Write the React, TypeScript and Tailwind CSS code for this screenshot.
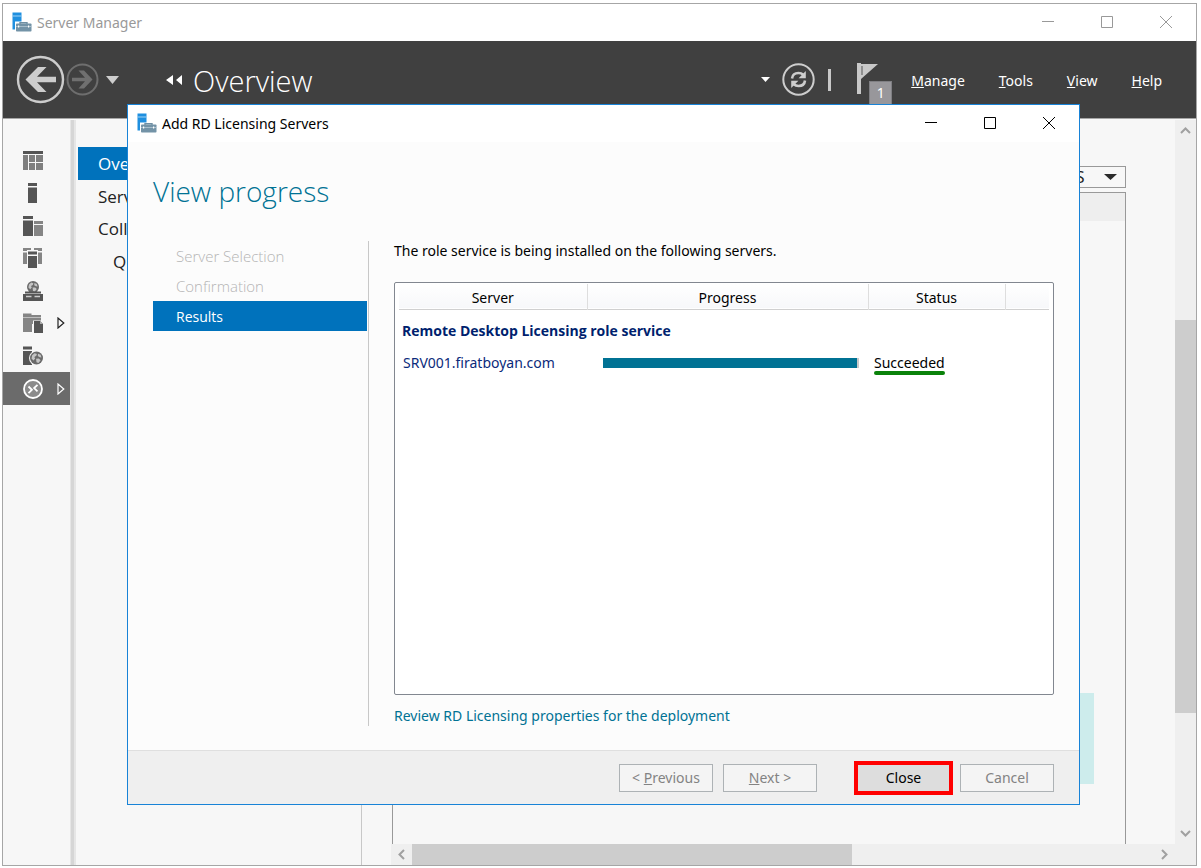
import type { ReactNode } from 'react';

function ServerIcon() {
  return (
    <svg width="20" height="20" viewBox="0 0 20 20" aria-hidden="true" className="mb-0.5">
      <rect x="0.500" y="0.500" width="9" height="17" fill="#1f8fdf" />
      <rect x="0.500" y="3.500" width="9" height="1" fill="#9fd4f5" />
      <path d="M3 9.500h17v10.500H3z" fill="#fff" />
      <path d="M8 12v-1.300h7v1.300" fill="none" stroke="#6f8fa3" strokeWidth="1.400" />
      <rect x="4" y="11.500" width="15.500" height="8" rx="0.800" fill="#7393a7" />
      <rect x="4" y="14" width="15.500" height="0.800" fill="#b5c8d4" />
      <rect x="6" y="13.500" width="1.200" height="2" fill="#fff" />
      <rect x="16" y="13.500" width="1.200" height="2" fill="#fff" />
    </svg>
  );
}

function WindowControls() {
  return (
    <div className="flex items-center gap-[46px]">
      <button type="button" aria-label="Minimize" className="flex size-[13px] items-center">
        <svg width="13" height="13" viewBox="0 0 13 13" stroke="currentColor" fill="none"><path d="M1 5.500h12" /></svg>
      </button>
      <button type="button" aria-label="Maximize" className="flex size-[13px] items-center">
        <svg width="13" height="13" viewBox="0 0 13 13" stroke="currentColor" fill="none"><path d="M1.500 0.500h11v11h-11z" /></svg>
      </button>
      <button type="button" aria-label="Close window" className="flex size-[13px] items-center">
        <svg width="13" height="13" viewBox="0 0 13 13" stroke="currentColor" fill="none"><path d="M1 0l12 12M13 0L1 12" /></svg>
      </button>
    </div>
  );
}

function Globe({ cx, cy, r }: { cx: number; cy: number; r: number }) {
  return (
    <g transform={`translate(${cx} ${cy}) scale(${r / 6})`}>
      <circle r="6" fill="#6a6a6a" />
      <path d="M-4-2.600l2.200-1.800 2.200.6-.6 1.800-1.800 1 .8 1.400-1.600 1.800-1.800-1.800zM1.400-4l2.400 1 .8 2.600-1.600-.4-1.800-1zM-.4.600l2.600-.2 1.600 1.600-2 2.600-1.800-.6z" fill="#c4c4c4" />
    </g>
  );
}

function SideIcon({ children }: { children: ReactNode }) {
  return (
    <svg width="20" height="20" viewBox="0 0 20 20" aria-hidden="true">
      {children}
    </svg>
  );
}

const sideItems: { label: string; arrow?: boolean; selected?: boolean; icon: ReactNode }[] = [
  {
    label: 'Dashboard',
    icon: (
      <>
        <path d="M0 1h20v3H0z" fill="#555" />
        <path d="M0 5h5v15H0zM6 5h6v7H6zM13 5h7v7h-7zM6 13h6v7H6zM13 13h7v7h-7z" fill="#7f7f7f" />
      </>
    ),
  },
  {
    label: 'Local Server',
    icon: <path d="M5 0h9v3H5zM5 4.500h9V20H5z" fill="#555" />,
  },
  {
    label: 'All Servers',
    icon: (
      <>
        <path d="M0 0h10v3H0zM0 4.500h10V20H0z" fill="#555" />
        <path d="M11 5h9v3h-9zM11 9h9v11h-9z" fill="#858585" />
      </>
    ),
  },
  {
    label: 'AD DS',
    icon: (
      <>
        <path d="M0 0h8v3H0zM0 4.500h4V16H0zM11 0h8v3h-8zM15 4.500h4V16h-4z" fill="#858585" />
        <path d="M4 2h11v18H4z" fill="#f7f7f7" />
        <path d="M5 3.500h9v3H5zM5 8h9v12H5z" fill="#555" />
      </>
    ),
  },
  {
    label: 'DHCP',
    icon: (
      <>
        <Globe cx={10} cy={6} r={6} />
        <path d="M2 10.500h16v2H2zM0 13h20v7H0z" fill="#555" />
        <path d="M3 15.500h5.500M11.500 15.500h5.500" stroke="#ccc" strokeWidth="1.400" />
      </>
    ),
  },
  {
    label: 'File Services',
    arrow: true,
    icon: (
      <>
        <path d="M0 0.500h8.500v1.500h9.500v2.500H0zM0 5h18v6H9v8H0z" fill="#858585" />
        <path d="M10 7.500h10V20H10z" fill="#f7f7f7" />
        <path d="M11 8h6l3 3v9h-9z" fill="#555" />
        <path d="M17 8v3h3z" fill="#aaa" />
      </>
    ),
  },
  {
    label: 'IIS',
    icon: (
      <>
        <path d="M0 0.500h9v3H0zM0 5h9v14H0z" fill="#555" />
        <circle cx="13.500" cy="12" r="7.500" fill="#f7f7f7" />
        <Globe cx={13.5} cy={12} r={6.5} />
      </>
    ),
  },
  {
    label: 'Remote Desktop Services',
    arrow: true,
    selected: true,
    icon: (
      <>
        <circle cx="10" cy="10" r="9" fill="#8b8b8b" stroke="#fff" strokeWidth="1.800" />
        <path d="M5.500 7.500l3.400 3.300-3.400 3.300M14.500 5.800l-3.400 3.300 3.400 3.300" fill="none" stroke="#fff" strokeWidth="1.800" />
      </>
    ),
  },
];

function Chevron({ d }: { d: string }) {
  return (
    <svg width="21" height="21" viewBox="0 0 21 21" fill="none" stroke="#a0a0a0" strokeWidth="2" className="shrink-0" aria-hidden="true">
      <path d={d} />
    </svg>
  );
}

const footerButton = 'h-7 w-[94px] border border-[#adb2b5] bg-[#f4f4f4] text-sm text-[#838383]';

function Dialog() {
  return (
    <section
      role="dialog"
      aria-label="Add RD Licensing Servers"
      className="absolute top-[100px] right-[116px] left-[124px] z-10 border border-[#1883d7] bg-[#fcfcfc] text-sm text-black"
    >
      <header className="flex h-[37px] items-center bg-white pr-6 pl-[9px]">
        <ServerIcon />
        <h2 className="ml-[5px] flex-1">Add RD Licensing Servers</h2>
        <WindowControls />
      </header>
      <h1 className="mt-[31px] ml-[25px] font-['Open_Sans',sans-serif] text-[28px] leading-9 font-light text-[#007294]">View progress</h1>
      <div className="mt-8 flex pr-[25px] pl-[25px]">
        <nav aria-label="Wizard steps" className="w-[216px] shrink-0 border-r border-[#c8c8c8] pr-px font-['Open_Sans',sans-serif] text-[15px]">
          <ol>
            <li className="flex h-[30px] items-center pt-0.5 pl-[23px] font-light text-[#b4b4b4]">Server Selection</li>
            <li className="flex h-[30px] items-center pt-0.5 pl-[23px] font-light text-[#b4b4b4]">Confirmation</li>
            <li aria-current="step" className="flex h-[30px] items-center bg-[#0072bc] pt-0.5 pl-[23px] text-sm text-white">Results</li>
          </ol>
        </nav>
        <div className="ml-[25px] min-w-0 flex-1">
          <p className="leading-5">The role service is being installed on the following servers.</p>
          <div className="mt-[21px] h-[413px] rounded-xs border border-[#828790] bg-white px-1 pt-px">
            <table className="w-full table-fixed border-collapse">
              <colgroup>
                <col className="w-[188px]" />
                <col className="w-[281px]" />
                <col className="w-[137px]" />
                <col />
              </colgroup>
              <thead>
                <tr className="h-[25px] border-b border-[#d0d0d0] bg-linear-to-b from-white to-[#f7f8fa]">
                  <th className="border-r border-[#dedede] p-0 pt-1 font-normal">Server</th>
                  <th className="border-r border-[#dedede] p-0 pt-1 font-normal">Progress</th>
                  <th className="border-r border-[#dedede] p-0 pt-1 font-normal">Status</th>
                  <td />
                </tr>
              </thead>
              <tbody>
                <tr className="h-11">
                  <th colSpan={4} className="p-0 pl-[3px] text-left font-['Open_Sans',sans-serif] font-bold text-[#001f6e]">Remote Desktop Licensing role service</th>
                </tr>
                <tr className="h-5">
                  <td className="p-0 pl-1 text-[#0b2a7a]">SRV001.firatboyan.com</td>
                  <td className="p-0 pr-[9px] pl-4">
                    <div role="progressbar" aria-label="Progress" aria-valuenow={100} className="h-[10px] border-r-2 border-[#c9c9c9] bg-[#007294]" />
                  </td>
                  <td className="p-0 pl-[6px]">
                    <span className="relative inline-block leading-5">
                      Succeeded
                      <span className="absolute inset-x-0 -bottom-0.5 h-1 rounded-full bg-[#0a820a]" />
                    </span>
                  </td>
                  <td />
                </tr>
              </tbody>
            </table>
          </div>
          <a href="#licensing" className="mt-[11px] block h-5 leading-5 text-[#007294]">
            Review RD Licensing properties for the deployment
          </a>
        </div>
      </div>
      <footer className="mt-6 flex h-[54px] items-center justify-end border-t border-[#dfdfdf] bg-[#efefef] pr-[25px]">
        <button type="button" disabled className={footerButton}>&lt; <u>P</u>revious</button>
        <button type="button" disabled className={`${footerButton} ml-[10px]`}><u>N</u>ext &gt;</button>
        <button type="button" className="ml-10 h-7 w-[93px] bg-[#dddddd] text-sm text-black outline-4 -outline-offset-1 outline-[#ff0000]">Close</button>
        <button type="button" disabled className={`${footerButton} ml-[10px]`}>Cancel</button>
      </footer>
    </section>
  );
}

function Toolbar() {
  return (
    <header className="flex h-[77px] shrink-0 items-center bg-[#404040] pl-[13px] text-white">
      <button type="button" aria-label="Back" className="shrink-0">
        <svg width="49" height="49" viewBox="0 0 49 49" fill="none">
          <circle cx="24.500" cy="24.500" r="22.500" stroke="#cdcdcd" strokeWidth="2.400" />
          <path d="M9.500 24.500l12.500-12.500h8.500l-9.500 9.800h19v5.400h-19l9.500 9.800h-8.500z" fill="#cdcdcd" />
        </svg>
      </button>
      <button type="button" aria-label="Forward" className="ml-px shrink-0">
        <svg width="33" height="33" viewBox="0 0 33 33" fill="none">
          <circle cx="16.500" cy="16.500" r="15" stroke="#6e6e6e" strokeWidth="2" />
          <path d="M26.500 16.500l-8.500 -9h-5.500l6.500 7.200h-13v3.600h13l-6.500 7.200h5.500z" fill="#707070" />
        </svg>
      </button>
      <button type="button" aria-label="History" className="ml-[7px] shrink-0">
        <svg width="13" height="8" viewBox="0 0 13 8"><path d="M0 0h13L6.500 8z" fill="#cdcdcd" /></svg>
      </button>
      <svg className="ml-[47px] shrink-0" width="17" height="10" viewBox="0 0 17 10" aria-hidden="true">
        <path d="M7 0v10L0 5zM16 0v10L10 5z" fill="#fff" />
      </svg>
      <span className="ml-[10px] flex-1 pt-0.5 font-['Open_Sans',sans-serif] text-[29px] leading-9 font-light">Overview</span>
      <button type="button" aria-label="Refresh options" className="shrink-0">
        <svg width="9" height="5" viewBox="0 0 9 5"><path d="M0 0h9L4.500 5z" fill="#fff" /></svg>
      </button>
      <button type="button" aria-label="Refresh" className="ml-3 shrink-0">
        <svg width="33" height="33" viewBox="0 0 33 33" fill="none">
          <circle cx="16.500" cy="16.500" r="15.200" stroke="#cdcdcd" strokeWidth="2" />
          <path d="M10 15.500c.4-3.600 3.200-5.500 6.500-5.500 2 0 3.500.6 4.700 1.700M23 17.500c-.4 3.600-3.200 5.500-6.500 5.500-2 0-3.500-.6-4.700-1.700" stroke="#cdcdcd" strokeWidth="2.600" />
          <path d="M23.800 8v7.200h-7.200zM9.200 25v-7.200h7.200z" fill="#cdcdcd" />
        </svg>
      </button>
      <span className="ml-[13px] h-[22px] w-[3px] shrink-0 bg-[#c8c8c8]" />
      <button type="button" aria-label="Notifications" className="relative mt-5 ml-[26px] h-9 w-[35px] shrink-0 self-start">
        <svg width="22" height="32" viewBox="0 0 22 32" fill="none">
          <path d="M0 0h4v31H0zM4 1h17L4 16z" fill="#c8c8c8" />
          <path d="M5 3v9" stroke="#555" strokeWidth="1" />
        </svg>
        <span className="absolute top-5 left-3 flex h-6 w-[23px] items-center justify-center border border-[#7f7f83] bg-[#98979b] text-sm">1</span>
      </button>
      <nav aria-label="Main menu" className="mr-[34px] ml-[19px] flex shrink-0 gap-[34px] pt-0.5 text-sm">
        <button type="button"><u>M</u>anage</button>
        <button type="button"><u>T</u>ools</button>
        <button type="button"><u>V</u>iew</button>
        <button type="button"><u>H</u>elp</button>
      </nav>
    </header>
  );
}

export default function App() {
  return (
    <div className="flex min-h-screen flex-col bg-white pt-[3px] pr-1 pb-0.5 pl-0.5 font-['Noto_Sans','Open_Sans',sans-serif]">
      <div className="relative flex flex-1 flex-col border border-[#a6a6a6] bg-[#f7f7f7]">
        <div className="flex h-[37px] shrink-0 items-center bg-white pr-6 pl-[9px] text-sm text-[#999]">
          <ServerIcon />
          <span className="ml-[5px] flex-1">Server Manager</span>
          <WindowControls />
        </div>
        <Toolbar />
        <div className="flex flex-1 border-t border-[#a6a6a6] pt-px">
          <aside className="flex w-[67px] shrink-0 flex-col pt-6">
            <ul className="flex h-[261px] flex-col">
              {sideItems.map((item) => (
                <li key={item.label} className="flex flex-1">
                  <button
                    type="button"
                    aria-label={item.label}
                    className={`flex flex-1 items-center pl-5 ${item.selected ? 'bg-[#6b6b6b] text-white' : 'text-[#222]'}`}
                  >
                    <SideIcon>{item.icon}</SideIcon>
                    {item.arrow && (
                      <svg className="ml-[14px]" width="8" height="12" viewBox="0 0 8 12" fill="none" stroke="currentColor" aria-hidden="true">
                        <path d="M1 1v10L6.800 6z" strokeWidth="1.200" />
                      </svg>
                    )}
                  </button>
                </li>
              ))}
            </ul>
          </aside>
          <div className="w-[6px] shrink-0 border-r-2 border-l border-[#e6e6e6] bg-[#d6d6d6]" />
          <nav aria-label="Remote Desktop Services" className="ml-0.5 w-[284px] shrink-0 border-r border-[#c8c8c8] pt-[27px] font-['Open_Sans',sans-serif] text-[17px] text-[#222]">
            <a href="#overview" className="flex h-[33px] items-center bg-[#0072bc] pt-px pl-5 text-white">Overview</a>
            <a href="#servers" className="flex h-8 items-center pt-px pl-5">Servers</a>
            <a href="#collections" className="flex h-[33px] items-center pt-px pl-5">Collections</a>
            <a href="#quick" className="flex h-8 items-center pt-px pl-[35px]">Quick</a>
          </nav>
          <main className="flex min-w-0 flex-1 flex-col">
            <div className="flex flex-1">
              <div className="flex min-w-0 flex-1 flex-col pt-[46px] pr-[49px] pl-[30px]">
                <button type="button" className="flex h-[22px] w-[106px] items-center justify-between self-end border border-[#999] pr-2 pl-[18px] text-base text-[#222]">
                  <span>TASKS</span>
                  <svg width="13" height="6" viewBox="0 0 13 6" aria-hidden="true"><path d="M0 0h13L6.500 6z" fill="#2a2a2a" /></svg>
                </button>
                <div className="mt-1 flex flex-1 flex-col border-x border-t border-[#999]">
                  <div className="h-7 bg-[#eeeeee]" />
                  <div className="mt-auto mr-[31px] mb-[60px] ml-8 h-[91px] bg-[#cdecec]" />
                </div>
              </div>
              <div className="flex w-[21px] shrink-0 flex-col bg-[#efefef]">
                <Chevron d="M6 13l4.500-4.500L15 13" />
                <div className="flex-[179]" />
                <div className="h-[393px] bg-[#cdcdcd]" />
                <div className="flex-[110]" />
                <Chevron d="M6 8l4.500 4.500L15 8" />
              </div>
            </div>
            <div className="ml-[29px] flex h-[21px] bg-[#efefef]">
              <Chevron d="M13 6l-4.500 4.500L13 15" />
              <div className="w-[440px] bg-[#cdcdcd]" />
              <div className="flex-1" />
              <Chevron d="M8 6l4.500 4.500L8 15" />
              <div className="w-[21px]" />
            </div>
          </main>
        </div>
        <Dialog />
      </div>
    </div>
  );
}
